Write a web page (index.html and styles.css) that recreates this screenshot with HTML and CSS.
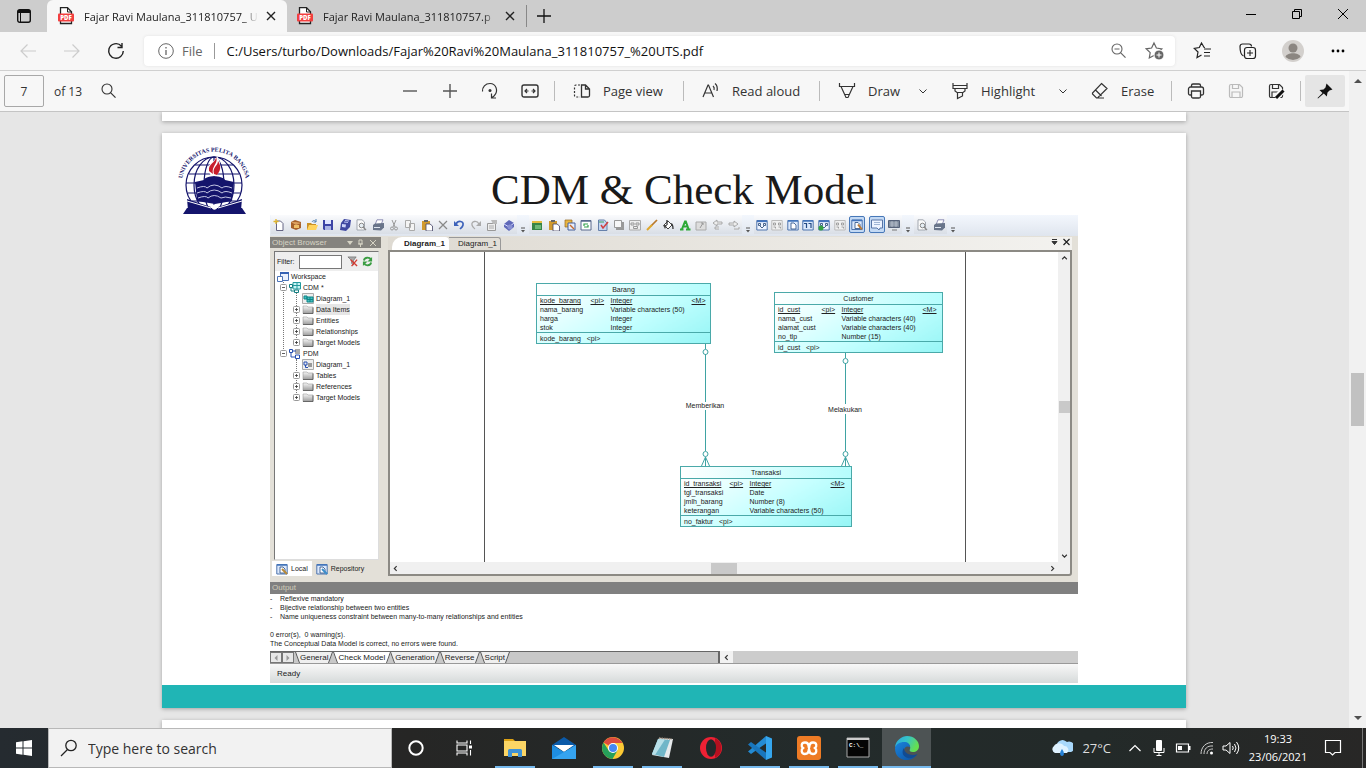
FILE: index.html
```html
<!DOCTYPE html>
<html lang="en">
<head>
<meta charset="utf-8">
<title>Fajar Ravi Maulana_311810757_ UTS.pdf</title>
<link rel="stylesheet" href="styles.css">
</head>
<body>
<svg class="defs" aria-hidden="true">
  <defs>
    <linearGradient id="edgeA" x1="0" y1="0" x2="1" y2="0.4"><stop offset="0" stop-color="#2aa5e0"/><stop offset="0.5" stop-color="#35c3c9"/><stop offset="1" stop-color="#65e04f"/></linearGradient>
    <linearGradient id="edgeB" x1="0" y1="0" x2="1" y2="1"><stop offset="0" stop-color="#1b84dc"/><stop offset="1" stop-color="#0c4f9e"/></linearGradient>
    <linearGradient id="folderG" x1="0" y1="0" x2="0" y2="1"><stop offset="0" stop-color="#f6f6f6"/><stop offset="1" stop-color="#9c9c9c"/></linearGradient>
  </defs>
  <symbol id="pdf" viewBox="0 0 16 18"><path d="M2.5.7h7l4 4V16.5h-11z" fill="#fff" stroke="#222" stroke-width="1.3"/><path d="M9.5 1v4h4" fill="none" stroke="#222"/><rect y="6.500" width="16" height="8" rx="1" fill="#f23f3f"/></symbol>
  <symbol id="x" viewBox="0 0 10 10"><path d="M1 1l8 8M9 1L1 9" fill="none" stroke="currentColor" stroke-width="1.400"/></symbol>
  <symbol id="chev" viewBox="0 0 10 10"><path d="M1.500 3.500L5 7l3.500-3.500" fill="none" stroke="currentColor"/></symbol>
  <symbol id="star" viewBox="0 0 20 20"><path d="M10 2l2.400 5 5.400.8-4 3.800.9 5.400L10 14.500 5.300 17l.9-5.400-4-3.800 5.400-.8z" fill="none" stroke="currentColor" stroke-width="1.200"/></symbol>
  <symbol id="lens" viewBox="0 0 18 18"><circle cx="7" cy="7" r="5" fill="none" stroke="currentColor" stroke-width="1.100"/><path d="M10.500 10.700l5 5" stroke="currentColor" stroke-width="1.200"/></symbol>
  <symbol id="save" viewBox="0 0 18 18"><path d="M2.500 4a1.500 1.500 0 011.500-1.500h8.500l3 3V14a1.500 1.500 0 01-1.500 1.500H4A1.500 1.500 0 012.500 14zM5.500 2.500V6.500h6V2.500M5 15.500V10h8v5.500" fill="none" stroke="currentColor" stroke-width="1.200"/></symbol>
  <symbol id="folder" viewBox="0 0 12 11"><path d="M1 2h4l1 1h5v6.500H1z" fill="url(#folderG)" stroke="#888" stroke-width=".5"/><path d="M1 9.500h10V3.500" fill="none" stroke="#555" stroke-width=".8"/></symbol>
  <symbol id="plusbox" viewBox="0 0 7 7"><rect x=".5" y=".5" width="6" height="6" rx="1" fill="#fff" stroke="#999"/><path d="M2 3.500h3M3.500 2v3" stroke="#333" stroke-width=".8"/></symbol>
  <symbol id="minusbox" viewBox="0 0 7 7"><rect x=".5" y=".5" width="6" height="6" rx="1" fill="#fff" stroke="#999"/><path d="M2 3.500h3" stroke="#333" stroke-width=".8"/></symbol>
  <symbol id="new" viewBox="0 0 12 12"><path d="M3.500 2h4L10 4.500V11.500H3.500z" fill="#fff" stroke="#557" stroke-width=".9"/><path d="M3 0v5M.5 2.500h5" stroke="#dfb52d" stroke-width="1.300"/></symbol>
  <symbol id="pack" viewBox="0 0 12 12"><path d="M1 3l4-2 3 1 3 1v6l-5 2-5-2z" fill="#a8622b"/><path d="M1 3h5l5 1-5 2z" fill="#dba060"/><path d="M4 6h5v3H4z" fill="#f0c06a"/></symbol>
  <symbol id="open" viewBox="0 0 12 12"><path d="M1 4h4l1 1h4v6H1z" fill="#c99024"/><path d="M3 6h9l-2 5H1z" fill="#ffd35c"/><path d="M6 3c1-2 3-2 4 0M10 0v3H7.500" fill="none" stroke="#5080b0"/></symbol>
  <symbol id="disk" viewBox="0 0 12 12"><path d="M1 1h10v10H2l-1-1z" fill="#3b43a5"/><path d="M3 1h6v4H3z" fill="#dfe5ff"/><path d="M3 7h6v4H3z" fill="#aab4e4"/></symbol>
  <symbol id="disks" viewBox="0 0 12 12"><path d="M5 0l7 1-1 7-4 4-6-1 1-7z" fill="#4048a2"/><path d="M3 5l4 .5-.5 3-3.500-.5z" fill="#cdd4fa"/><path d="M6 1.500l4 .5M5 3l4 .5" stroke="#b9c0f1"/></symbol>
  <symbol id="preview" viewBox="0 0 12 12"><path d="M2 .8h5L9.500 3v8H2z" fill="#fafafa" stroke="#9a9fa8" stroke-width=".9"/><circle cx="6.500" cy="6.500" r="2.300" fill="#e6eef4" stroke="#888"/><path d="M8 8l3 3" stroke="#888" stroke-width="1.300"/></symbol>
  <symbol id="print" viewBox="0 0 12 12"><path d="M5 .8h6l-2 5H3z" fill="#fff" stroke="#669" stroke-width=".7"/><path d="M1 6l2-1.500 9-.5v4.500L9 11.500 1 11z" fill="#69758a"/><path d="M2 8.500h6" stroke="#dfe6f0"/></symbol>
  <symbol id="cut" viewBox="0 0 12 12"><path d="M4 1l3 7M8 1L5 8" stroke="#999"/><circle cx="4" cy="9.500" r="1.500" fill="none" stroke="#999"/><circle cx="8" cy="9.500" r="1.500" fill="none" stroke="#999"/></symbol>
  <symbol id="copy" viewBox="0 0 12 12"><path d="M1.500 1.500h5v7h-5zM5.500 4.500h5v7h-5z" fill="#f4f4f4" stroke="#aaa"/></symbol>
  <symbol id="paste" viewBox="0 0 12 12"><path d="M1 2h8v9H1z" fill="#d19a2e"/><path d="M3 1h4v2H3z" fill="#666"/><path d="M5 5h4l2.500 2v5H5z" fill="#fff" stroke="#446" stroke-width=".8"/></symbol>
  <symbol id="del" viewBox="0 0 12 12"><path d="M2 2l8 8M10 2l-8 8" stroke="#888" stroke-width="1.200"/></symbol>
  <symbol id="undo" viewBox="0 0 12 12"><path d="M3 5c2-4 8-3 7 1-.4 2-2 3-3 4" fill="none" stroke="#3d62ba" stroke-width="1.700"/><path d="M1 2v5h5z" fill="#3d62ba"/></symbol>
  <symbol id="redo" viewBox="0 0 12 12"><path d="M9 5C7 1 1 2 2 6c.4 2 2 3 3 4" fill="none" stroke="#aaa" stroke-width="1.300"/><path d="M11 2v5H6z" fill="#aaa"/></symbol>
  <symbol id="props" viewBox="0 0 12 12"><path d="M1.500 4.500h8v7h-8z" fill="#eee" stroke="#999"/><path d="M3 7h5M3 9h5" stroke="#999" stroke-width=".8"/><path d="M5 1h6v4H7z" fill="#bbb"/></symbol>
  <symbol id="book" viewBox="0 0 12 12"><path d="M1 5l5-4 5 3v4l-5 4-5-4z" fill="#6069b9"/><path d="M1 5l5 3 5-4" fill="none" stroke="#d8dcff"/><circle cx="7" cy="8" r="2.500" fill="#8991d3"/></symbol>
  <symbol id="green" viewBox="0 0 12 12"><path d="M1 3h4l1-1h5v9H1z" fill="#378446"/><path d="M1 3h10" stroke="#e5bc3f" stroke-width="2"/><path d="M4 6h6v4H4z" fill="#6db777"/></symbol>
  <symbol id="layers" viewBox="0 0 12 12"><path d="M1 1h7v7H1z" fill="#e8b542" stroke="#96681f" stroke-width=".7"/><path d="M4 4h7v7H4z" fill="#e6eefc" stroke="#47609b"/><path d="M6 6l4 4" stroke="#c66b32" stroke-width="1.500"/></symbol>
  <symbol id="refresh" viewBox="0 0 12 12"><path d="M1 1.500h10v9.500H1z" fill="#fff" stroke="#58688c"/><path d="M1 2h10" stroke="#58688c" stroke-width="1.500"/><path d="M4 7V5h4M8 6v2H4" fill="none" stroke="#32a049" stroke-width="1.200"/></symbol>
  <symbol id="check" viewBox="0 0 12 12"><path d="M1.500 1h6L10 4v7.500H1.500z" fill="#c3d6f2" stroke="#6681ab"/><path d="M4 6l2 3 5-6" fill="none" stroke="#d04141" stroke-width="1.500"/><path d="M2 3h5" stroke="#42a060"/></symbol>
  <symbol id="shadow" viewBox="0 0 12 12"><path d="M3 3h8v8H3z" fill="#999"/><path d="M1.500 1.500h7v7h-7z" fill="#f7f7f7" stroke="#999"/></symbol>
  <symbol id="gridgray" viewBox="0 0 12 12"><path d="M.5 1.500h11v9.500H.5z" fill="#eee" stroke="#aaa"/><path d="M2 4h3v2H2zM7 4h3v2H7zM4.500 7.500h4v2h-4z" fill="none" stroke="#999"/></symbol>
  <symbol id="brush" viewBox="0 0 12 12"><path d="M11 1L5 7" stroke="#b8782b" stroke-width="1.700"/><path d="M6 6L1 11" stroke="#dfa72d" stroke-width="2"/></symbol>
  <symbol id="bucket" viewBox="0 0 12 12"><path d="M2 6l4-4 4 4-4 4z" fill="#fff" stroke="#444"/><path d="M5 1v5M9 5c2 0 2 2 2 5" fill="none" stroke="#333" stroke-width="1.300"/><path d="M1 6h4l-2 4z" fill="#444"/></symbol>
  <symbol id="lettera" viewBox="0 0 12 12"><path d="M1 10.500h3.500M7 10.500h4.500M3 10L6 2.500h.8L9.500 10M4.500 7.500H8" fill="none" stroke="#2da936" stroke-width="2"/></symbol>
  <symbol id="picgray" viewBox="0 0 12 12"><path d="M1 3h10v8H1z" fill="#ddd" stroke="#aaa"/><path d="M5 9l3-5M6 4h2v2" fill="none" stroke="#999"/></symbol>
  <symbol id="left" viewBox="0 0 12 12"><path d="M6 1L2 4l4 3V5h5V3H6zM8 8H4v2h4" fill="#eee" stroke="#999" stroke-width=".8"/></symbol>
  <symbol id="right" viewBox="0 0 12 12"><path d="M6 2l4 3-4 3V6H1V4h5zM6 10h5V8" fill="#eee" stroke="#999" stroke-width=".8"/></symbol>
  <symbol id="win" viewBox="0 0 12 12"><path d="M.8 1.500h10.400v9.500H.8z" fill="#eef4ff" stroke="#4e74ad"/><path d="M1 2.300h10" stroke="#4274bd" stroke-width="1.700"/><path d="M2.500 4.500h2v2h-2zM7.500 4.500h2v2h-2zM4 7l2 2 2-2" fill="none" stroke="#34547f" stroke-width=".9"/></symbol>
  <symbol id="wingray" viewBox="0 0 12 12"><path d="M.8 1.500h10.400v9.500H.8z" fill="#f0f0f0" stroke="#bbb"/><path d="M2.500 4h2v2h-2zM7.500 4h2v2h-2zM2.500 8h2v1.500M7.500 8h2v1.500" fill="none" stroke="#999" stroke-width=".9"/></symbol>
  <symbol id="windoc" viewBox="0 0 12 12"><path d="M.8 1.500h10.400v9.500H.8z" fill="#dce9fc" stroke="#4e74ad"/><path d="M1 2h10" stroke="#4274bd" stroke-width="1.500"/><path d="M4 4h3l2 2v4H4z" fill="#fff" stroke="#234a84" stroke-width=".8"/></symbol>
  <symbol id="wintwo" viewBox="0 0 12 12"><path d="M.8 1.500h10.400v9.500H.8z" fill="#dce9fc" stroke="#4e74ad"/><path d="M1 2h10" stroke="#4274bd" stroke-width="1.500"/><path d="M2 4.500h2.500V9M6.500 4.500H9V9" fill="none" stroke="#234a84" stroke-width="1.200"/></symbol>
  <symbol id="note" viewBox="0 0 12 12"><path d="M.5 1.500h11v8H9l-1 2-2-2H.5z" fill="#edf3ff" stroke="#5975a6"/><path d="M3 4h6M3 6h6" stroke="#8ba4ca" stroke-width=".8"/></symbol>
  <symbol id="screen" viewBox="0 0 12 12"><path d="M.5 1.500h11v7H.5z" fill="#7d899b" stroke="#56627a"/><path d="M2 4h8M2 6h8M4 2v6M8 2v6" stroke="#ccd3df" stroke-width=".6"/><path d="M4 11h5" stroke="#777"/></symbol>
  <symbol id="dd" viewBox="0 0 6 6"><path d="M1 1h4" stroke="#555"/><path d="M1 3h4L3 5.500z" fill="#555"/></symbol>
</svg>

<header class="tabstrip">
  <button class="tabmenu" aria-label="Tab actions menu"><svg width="16" height="16" viewBox="0 0 16 16"><rect x="1.700" y="1.700" width="12.600" height="12.600" rx="2" fill="none" stroke="#111" stroke-width="1.400"/><path d="M2 3.500h12" stroke="#111" stroke-width="3"/><path d="M4.500 4v10" stroke="#111"/></svg></button>
  <div class="tab active"><svg class="pdf" viewBox="0 0 16 18"><use href="#pdf"/><text x="8" y="12.600">PDF</text></svg><span class="tabname">Fajar Ravi Maulana_311810757_ U</span><button class="close" aria-label="Close tab"><svg width="10" height="10"><use href="#x"/></svg></button></div>
  <div class="tab"><svg class="pdf" viewBox="0 0 16 18"><use href="#pdf"/><text x="8" y="12.600">PDF</text></svg><span class="tabname">Fajar Ravi Maulana_311810757.p</span><button class="close" aria-label="Close tab"><svg width="10" height="10"><use href="#x"/></svg></button></div>
  <button class="newtab" aria-label="New tab"><svg width="16" height="16" viewBox="0 0 16 16"><path d="M8 1v14M1 8h14" stroke="#111" stroke-width="1.300"/></svg></button>
  <div class="winbtns">
    <button aria-label="Minimize"><svg width="12" height="12" viewBox="0 0 12 12"><path d="M1 6.500h10" stroke="#000"/></svg></button>
    <button aria-label="Restore"><svg width="12" height="12" viewBox="0 0 12 12"><path d="M1.500 3.500h7v7h-7zM3.500 3.500v-2h7v7h-2" fill="none" stroke="#000"/></svg></button>
    <button aria-label="Close"><svg width="12" height="12" viewBox="0 0 12 12"><path d="M1 1l10 10M11 1L1 11" stroke="#000"/></svg></button>
  </div>
</header>

<nav class="navbar">
  <button class="nav dim" aria-label="Back"><svg width="18" height="18" viewBox="0 0 18 18"><path d="M17 9H2M8.500 2.500L2 9l6.500 6.500" fill="none" stroke="currentColor" stroke-width="1.200"/></svg></button>
  <button class="nav dim" aria-label="Forward"><svg width="18" height="18" viewBox="0 0 18 18"><path d="M1 9h15M9.500 2.500L16 9l-6.500 6.500" fill="none" stroke="currentColor" stroke-width="1.200"/></svg></button>
  <button class="nav" aria-label="Refresh"><svg width="18" height="18" viewBox="0 0 18 18"><path d="M16.300 9A7.300 7.300 0 112 6.800 7.300 7.300 0 0114.500 4.200M15 1v4.500h-4.500" fill="none" stroke="currentColor" stroke-width="1.400"/></svg></button>
  <div class="omnibox">
    <svg class="grey" width="16" height="16" viewBox="0 0 16 16"><circle cx="8" cy="8" r="7.300" fill="none" stroke="currentColor"/><path d="M8 7v5M8 4v1.400" stroke="currentColor" stroke-width="1.300"/></svg>
    <label class="scheme" for="url">File</label>
    <input id="url" class="url" type="text" value="C:/Users/turbo/Downloads/Fajar%20Ravi%20Maulana_311810757_%20UTS.pdf">
    <button class="inbox" aria-label="Zoom"><svg width="18" height="18"><use href="#lens"/><path d="M4.500 7h5" stroke="currentColor"/></svg></button>
    <button class="inbox" aria-label="Add to favorites"><svg width="20" height="20"><use href="#star" x="-1"/><circle cx="14" cy="14" r="5" fill="#666" stroke="#fff"/><path d="M14 11.500v5M11.500 14h5" stroke="#fff"/></svg></button>
  </div>
  <div class="navright">
    <button class="nav" aria-label="Favorites"><svg width="20" height="20" viewBox="0 0 20 20"><path d="M12 6.500l-1-.2L8.500 2 6.300 6.500l-5 .8L5 11l-1 5.500 4.500-2.500M11 8h7M11 11.500h6M11 15h6" fill="none" stroke="currentColor" stroke-width="1.200"/></svg></button>
    <button class="nav" aria-label="Collections"><svg width="20" height="20" viewBox="0 0 20 20"><path d="M5.500 15C3 14 2 10 2 5.500A2.500 2.500 0 014.500 3H11a2.500 2.500 0 012.500 2.500" fill="none" stroke="currentColor" stroke-width="1.200"/><rect x="6.500" y="6.500" width="11" height="11" rx="2.500" fill="#f7f7f7" stroke="currentColor" stroke-width="1.200"/><path d="M12 9v6M9 12h6" stroke="currentColor" stroke-width="1.100"/></svg></button>
    <button class="nav" aria-label="Profile"><svg width="22" height="22" viewBox="0 0 22 22"><circle cx="11" cy="11" r="11" fill="#d3d0cd"/><circle cx="11" cy="8" r="4.500" fill="#8b8681"/><path d="M3.500 17c1-5 14-5 15 0a11 11 0 01-15 0z" fill="#8b8681"/></svg></button>
    <button class="nav" aria-label="Settings and more"><svg width="16" height="4" viewBox="0 0 16 4"><circle cx="3" cy="2" r="1.400"/><circle cx="8" cy="2" r="1.400"/><circle cx="13" cy="2" r="1.400"/></svg></button>
  </div>
</nav>

<div class="viewer">
  <div class="viewmain">
    <div class="pdfbar">
      <input class="pageno" type="text" value="7" aria-label="Page number">
      <span class="of">of 13</span>
      <button class="find" aria-label="Find"><svg width="18" height="18"><use href="#lens"/></svg></button>
      <div class="tools">
        <button class="sq" aria-label="Zoom out"><svg width="16" height="16" viewBox="0 0 16 16"><path d="M1 8h14" stroke="#555" stroke-width="1.400"/></svg></button>
        <button class="sq" aria-label="Zoom in"><svg width="16" height="16" viewBox="0 0 16 16"><path d="M1 8h14M8 1v14" stroke="#555" stroke-width="1.400"/></svg></button>
        <button class="sq" aria-label="Rotate"><svg width="18" height="18" viewBox="0 0 18 18"><path d="M1.500 9.500C1 5 4.500 1.500 9 1.500c6 0 9 7.500 4 12.500l-2 1.500M10.500 11.500v4.500H15" fill="none" stroke="currentColor" stroke-width="1.200"/><circle cx="9" cy="8.500" r="1.500" fill="currentColor"/></svg></button>
        <button class="sq" aria-label="Fit to width"><svg width="18" height="16" viewBox="0 0 18 16"><rect x="1" y="2" width="16" height="12" rx="2" fill="none" stroke="currentColor" stroke-width="1.400"/><path d="M4 8h3.500M10.500 8H14M6 6L4 8l2 2M12 6l2 2-2 2" fill="none" stroke="currentColor" stroke-width="1.200"/></svg></button>
        <span class="sep tight"></span>
        <button class="lab pv"><svg width="18" height="18" viewBox="0 0 18 18"><path d="M7 3H3a1.500 1.500 0 00-1.500 1.500v9A1.500 1.500 0 003 15h4" fill="none" stroke="currentColor" stroke-width="1.200" stroke-dasharray="2 1.500"/><path d="M8.500 3h4l4 4v6.500A1.500 1.500 0 0115 15H8.500zM12.500 3v4h4" fill="none" stroke="currentColor" stroke-width="1.300"/></svg>Page view</button>
        <span class="sep"></span>
        <button class="lab ra"><svg width="18" height="18" viewBox="0 0 18 18"><path d="M1 15L6 3h.5l5 12M3 11h6.500M11 4c1.300 1 1.300 3 1 4M13 1.500c2.500 2 2.500 5 2 7.500" fill="none" stroke="currentColor" stroke-width="1.200"/></svg>Read aloud</button>
        <span class="sep"></span>
        <button class="lab dr"><svg width="18" height="18" viewBox="0 0 18 18"><path d="M1.500 1v3.500h15V1M3 4.500l5 11h2l5-11M7 12.500h4" fill="none" stroke="currentColor" stroke-width="1.200"/></svg>Draw<svg class="chev" width="10" height="10"><use href="#chev"/></svg></button>
        <button class="lab hl"><svg width="18" height="18" viewBox="0 0 18 18"><path d="M2 1v5.500h14V1M2 3.500h14M4 6.500V9l2 1.500h6L14 9V6.500M6.500 10.500v6l5-2.500v-3.500" fill="none" stroke="currentColor" stroke-width="1.200"/></svg>Highlight<svg class="chev" width="10" height="10"><use href="#chev"/></svg></button>
        <button class="lab er"><svg width="18" height="18" viewBox="0 0 18 18"><path d="M10.500 1.500l5.500 5-9.500 9.500H5.500L1.500 12V11zM4.500 8l6 6M5 16h8" fill="none" stroke="currentColor" stroke-width="1.200"/></svg>Erase</button>
        <span class="sep end"></span>
        <button class="sq" aria-label="Print"><svg width="18" height="18" viewBox="0 0 18 18"><path d="M4.500 5V3.500A1.500 1.500 0 016 2h6a1.500 1.500 0 011.500 1.500V5M4.500 13H3a1.500 1.500 0 01-1.500-1.500V7A2 2 0 013.500 5h11a2 2 0 012 2v4.500A1.500 1.500 0 0115 13h-1.500M4.500 9h9v5.500A1.500 1.500 0 0112 16H6a1.500 1.500 0 01-1.500-1.500z" fill="none" stroke="currentColor" stroke-width="1.300"/></svg></button>
        <button class="sq faint" aria-label="Save" disabled><svg width="18" height="18"><use href="#save"/></svg></button>
        <button class="sq" aria-label="Save as"><svg width="18" height="18"><use href="#save"/><path d="M16 8l-7 8" stroke="#f7f7f7" stroke-width="6"/><path d="M16.500 8.500L9 16" stroke="#111" stroke-width="3"/></svg></button>
        <span class="sep last"></span>
        <button class="sq pin" aria-label="Unpin toolbar"><svg width="18" height="18" viewBox="0 0 18 18"><path d="M10.500 1.500l6 6-3 1-2 2-.7 4-3-3L2 16.500l-.5-.5 5-5-3-3 4-.6 2-2z" fill="#111"/></svg></button>
      </div>
    </div>

    <main class="pages">
      <div class="page prev"></div>
      <section class="page slide">
        <div class="slidehead">
          <svg class="logo" viewBox="0 0 76 68" role="img" aria-label="Universitas Pelita Bangsa">
            <path id="arc" d="M7 45A32 31.500 0 1169 45" fill="none"/>
            <text class="arctext"><textPath href="#arc" startOffset="50%" text-anchor="middle">UNIVERSITAS PELITA BANGSA</textPath></text>
            <g fill="none" stroke="#14146c" stroke-width="1.200"><circle cx="38" cy="39" r="28"/><ellipse cx="38" cy="39" rx="10" ry="28"/><ellipse cx="38" cy="39" rx="20" ry="28"/><path d="M38 11v50M10 37h56M13 28h50M19 19h38M12 47h52M16 55h44"/></g>
            <path d="M32 24c0-8 8-8 9-14 4 6 5 14-1 20h-5z" fill="#fff"/>
            <path d="M33 25c-1-8 7-8 7-14 3 6-5 9-3 17zM38 28c-2-7 4-8 4-13 4 6 2 10-1 14z" fill="#c81e2c"/>
            <path d="M19 36l9-2c2-5 18-5 21 0l9 2-2 19-17 3-18-3z" fill="#14146c"/>
            <path d="M21 42q8-3 10 0 7-6 15 0 3-3 10 0M21 47q8-3 10 0 7-6 15 0 3-3 10 0M22 52q8-3 10 0 6-5 13 0 4-2 10 0" fill="none" stroke="#d8daf0" stroke-width=".9"/>
            <path d="M11 53l24 8v3H12zM66 53l-24 8v3h23z" fill="#14146c"/>
            <path d="M7 68l4-6h25q2 3 5 0h25l4 6z" fill="#14146c"/>
            <path d="M11 55l24 7M66 55l-24 7" stroke="#fff" stroke-width="1"/>
            <circle cx="38.500" cy="61" r="2.500" fill="#fff"/>
          </svg>
          <h1>CDM &amp; Check Model</h1>
        </div>

        <div class="app">
          <div class="toolbar">
            <div class="grp g15"><svg><use href="#new"/></svg><svg><use href="#pack"/></svg><svg><use href="#open"/></svg><svg><use href="#disk"/></svg><svg><use href="#disks"/></svg><svg><use href="#preview"/></svg><svg><use href="#print"/></svg><svg><use href="#cut"/></svg><svg><use href="#copy"/></svg><svg><use href="#paste"/></svg><svg><use href="#del"/></svg><svg><use href="#undo"/></svg><svg><use href="#redo"/></svg><svg><use href="#props"/></svg><svg><use href="#book"/></svg></div>
            <svg class="dd"><use href="#dd"/></svg>
            <div class="grp g13"><svg><use href="#green"/></svg><svg><use href="#paste"/></svg><svg><use href="#layers"/></svg><svg><use href="#refresh"/></svg><svg><use href="#check"/></svg><svg><use href="#shadow"/></svg><svg><use href="#gridgray"/></svg><svg><use href="#brush"/></svg><svg><use href="#bucket"/></svg><svg><use href="#lettera"/></svg><svg><use href="#picgray"/></svg><svg><use href="#left"/></svg><svg><use href="#right"/></svg></div>
            <svg class="dd"><use href="#dd"/></svg>
            <div class="grp g9"><svg><use href="#win"/></svg><svg><use href="#wingray"/></svg><svg><use href="#windoc"/></svg><svg><use href="#wintwo"/></svg><svg><use href="#win"/><circle cx="3" cy="9" r="2.500" fill="#35a342"/></svg><svg><use href="#wingray"/></svg><svg class="on" viewBox="0 0 12 12"><use href="#windoc"/><path d="M7 6l4 5" stroke="#b87938" stroke-width="2"/></svg><svg class="on" viewBox="0 0 12 12"><use href="#note"/></svg><svg><use href="#screen"/></svg></div>
            <svg class="dd"><use href="#dd"/></svg>
            <div class="grp g2"><svg><use href="#preview"/></svg><svg><use href="#print"/></svg></div>
            <svg class="dd"><use href="#dd"/></svg>
          </div>

          <div class="work">
            <aside class="browser">
              <div class="btitle"><span>Object Browser</span><svg width="30" height="8" viewBox="0 0 30 8"><path d="M0 2h6L3 6z" fill="#d6d3c4"/><path d="M12 1h3v4h-3zM11 5h5M13.500 5v3M23 1l6 6M29 1l-6 6" fill="none" stroke="#d6d3c4"/></svg></div>
              <div class="bbody">
                <div class="filter"><label for="filter">Filter:</label><input id="filter" type="text"><svg width="11" height="11" viewBox="0 0 12 12"><path d="M1 1h9L7 5v5L5 8V5z" fill="#aaa" stroke="#666" stroke-width=".7"/><path d="M4 4l7 7M11 4l-6 7" stroke="#d43b32" stroke-width="1.500"/></svg><svg width="11" height="11" viewBox="0 0 12 12"><path d="M2 5c1-4 6-4 8-1M10 7c-1 4-6 4-8 1" fill="none" stroke="#3a9d42" stroke-width="2"/><path d="M11 1v5H6zM1 11V6h5z" fill="#3a9d42"/></svg></div>
                <div class="tree">
                  <div class="row"><svg width="12" height="11" viewBox="0 0 12 11"><path d="M3.500 1.500h8v8h-8z" fill="#eaf2ff" stroke="#4b73b7"/><path d="M3 2h9" stroke="#3462b5" stroke-width="2"/><path d="M.5 5.500h5v5h-5z" fill="#fff" stroke="#4b73b7"/></svg>Workspace</div>
                  <ul class="lvl1">
                    <li><div class="row"><svg class="box"><use href="#minusbox"/></svg><svg width="12" height="11" viewBox="0 0 12 11"><path d="M4 .5h7.500V7H4zM4 3.500h8M8 .5V7" fill="#c8f5f5" stroke="#249a9d"/><path d="M.5 2.500h3v3h-3zM5.500 8h4v2.500h-4zM2 5.500V9h3" fill="none" stroke="#148082"/></svg>CDM *</div>
                      <ul class="lvl2">
                        <li class="row"><i class="box"></i><svg width="12" height="11" viewBox="0 0 12 11"><path d="M.5.5h11v10H.5z" fill="#eee" stroke="#aaa"/><path d="M2 3h3v3H2zM5 4h6v5H5zM5 6.500h6M8 4v5" fill="#46bfc0" stroke="#0d8587"/></svg>Diagram_1</li>
                        <li class="row"><svg class="box"><use href="#plusbox"/></svg><svg width="12" height="11"><use href="#folder"/></svg><span class="sel">Data Items</span></li>
                        <li class="row"><svg class="box"><use href="#plusbox"/></svg><svg width="12" height="11"><use href="#folder"/></svg>Entities</li>
                        <li class="row"><svg class="box"><use href="#plusbox"/></svg><svg width="12" height="11"><use href="#folder"/></svg>Relationships</li>
                        <li class="row"><svg class="box"><use href="#plusbox"/></svg><svg width="12" height="11"><use href="#folder"/></svg>Target Models</li>
                      </ul>
                    </li>
                    <li><div class="row"><svg class="box"><use href="#minusbox"/></svg><svg width="12" height="11" viewBox="0 0 12 11"><path d="M6 1h5v5H6z" fill="#aaa"/><path d="M.5 1.500h3v3h-3zM6.500 7h4v3.500h-4zM2 4.500V9h4M4 3h3" fill="none" stroke="#274fb0"/></svg>PDM</div>
                      <ul class="lvl2">
                        <li class="row"><i class="box"></i><svg width="12" height="11" viewBox="0 0 12 11"><path d="M.5.5h11v10H.5z" fill="#eee" stroke="#aaa"/><path d="M2 3h3v3H2zM3.500 6v2.500H6" fill="none" stroke="#274fb0"/><path d="M6 4h4v4H6z" fill="#999"/></svg>Diagram_1</li>
                        <li class="row"><svg class="box"><use href="#plusbox"/></svg><svg width="12" height="11"><use href="#folder"/></svg>Tables</li>
                        <li class="row"><svg class="box"><use href="#plusbox"/></svg><svg width="12" height="11"><use href="#folder"/></svg>References</li>
                        <li class="row"><svg class="box"><use href="#plusbox"/></svg><svg width="12" height="11"><use href="#folder"/></svg>Target Models</li>
                      </ul>
                    </li>
                  </ul>
                </div>
              </div>
              <div class="btabs"><button class="cur"><svg width="12" height="12"><use href="#windoc"/><path d="M6 6l5 5" stroke="#b88a38" stroke-width="2"/></svg>Local</button><button><svg width="12" height="12"><use href="#windoc"/><path d="M6 6l5 5" stroke="#3a8ecb" stroke-width="2"/></svg>Repository</button></div>
            </aside>

            <div class="editor">
              <div class="etabs"><button class="cur">Diagram_1</button><button>Diagram_1</button><svg width="20" height="8" viewBox="0 0 20 8"><path d="M1 1.500h5M1 3.500h5L3.500 6.500z" fill="#333" stroke="#333"/><path d="M12.500 1l6 6M18.500 1l-6 6" stroke="#222" stroke-width="1.200"/></svg></div>
              <div class="frame">
                <div class="canvas">
                  <svg class="links" viewBox="0 0 668 310" fill="none">
                    <path d="M94.500 0v310M575.500 0v310" stroke="#555"/>
                    <g stroke="#3fa3a3"><path d="M315.500 92v5M315.500 102v48M315.500 158v41M315.500 205v9M315.500 205l-4 9M315.500 205l4 9"/><circle cx="315.500" cy="100" r="2.500"/><circle cx="315.500" cy="202" r="2.500"/>
                    <path d="M455.500 101v5M455.500 111v41M455.500 162v37M455.500 205v9M455.500 205l-4 9M455.500 205l4 9"/><circle cx="455.500" cy="109" r="2.500"/><circle cx="455.500" cy="202" r="2.500"/></g>
                  </svg>
                  <span class="link l1">Memberikan</span><span class="link l2">Melakukan</span>
                  <table class="entity e1"><caption>Barang</caption><tbody>
                    <tr class="key"><td><u>kode_barang</u></td><td><u>&lt;pi&gt;</u></td><td><u>Integer</u></td><td><u>&lt;M&gt;</u></td></tr>
                    <tr><td>nama_barang</td><td></td><td>Variable characters (50)</td><td></td></tr>
                    <tr><td>harga</td><td></td><td>Integer</td><td></td></tr>
                    <tr><td>stok</td><td></td><td>Integer</td><td></td></tr></tbody>
                    <tfoot><tr><td colspan="4">kode_barang&nbsp;&nbsp; &lt;pi&gt;</td></tr></tfoot></table>
                  <table class="entity e2"><caption>Customer</caption><tbody>
                    <tr class="key"><td><u>id_cust</u></td><td><u>&lt;pi&gt;</u></td><td><u>Integer</u></td><td><u>&lt;M&gt;</u></td></tr>
                    <tr><td>nama_cust</td><td></td><td>Variable characters (40)</td><td></td></tr>
                    <tr><td>alamat_cust</td><td></td><td>Variable characters (40)</td><td></td></tr>
                    <tr><td>no_tlp</td><td></td><td>Number (15)</td><td></td></tr></tbody>
                    <tfoot><tr><td colspan="4">id_cust&nbsp;&nbsp; &lt;pi&gt;</td></tr></tfoot></table>
                  <table class="entity e3"><caption>Transaksi</caption><tbody>
                    <tr class="key"><td><u>id_transaksi</u></td><td><u>&lt;pi&gt;</u></td><td><u>Integer</u></td><td><u>&lt;M&gt;</u></td></tr>
                    <tr><td>tgl_transaksi</td><td></td><td>Date</td><td></td></tr>
                    <tr><td>jmlh_barang</td><td></td><td>Number (8)</td><td></td></tr>
                    <tr><td>keterangan</td><td></td><td>Variable characters (50)</td><td></td></tr></tbody>
                    <tfoot><tr><td colspan="4">no_faktur&nbsp;&nbsp; &lt;pi&gt;</td></tr></tfoot></table>
                </div>
                <div class="vs"><svg viewBox="0 0 6 6"><path d="M1 4.500l2-2 2 2"/></svg><i></i><svg viewBox="0 0 6 6"><path d="M1 1.500l2 2 2-2"/></svg></div>
                <div class="hs"><svg viewBox="0 0 6 6"><path d="M4 1L2 3l2 2"/></svg><i></i><svg viewBox="0 0 6 6"><path d="M2 1l2 2-2 2"/></svg></div>
              </div>
            </div>
          </div>

          <div class="outtitle">Output</div>
          <div class="output">
            <ul><li>Reflexive mandatory</li><li>Bijective relationship between two entities</li><li>Name uniqueness constraint between many-to-many relationships and entities</li></ul>
            <p>0 error(s),&nbsp; 0 warning(s).</p>
            <p>The Conceptual Data Model is correct, no errors were found.</p>
          </div>
          <div class="outtabs">
            <div class="otl">
              <span class="step"><svg width="4" height="6" viewBox="0 0 4 6"><path d="M3.500 0v6L.5 3z" fill="#999"/></svg></span><span class="step"><svg width="4" height="6" viewBox="0 0 4 6"><path d="M.5 0v6l3-3z" fill="#999"/></svg></span>
              <div class="otabs"><button>General</button><button class="cur">Check Model</button><button>Generation</button><button>Reverse</button><button>Script</button></div>
            </div>
            <div class="otr"><svg viewBox="0 0 6 6"><path d="M4 1L2 3l2 2"/></svg></div>
          </div>
          <div class="status">Ready</div>
        </div>
        <div class="teal"></div>
      </section>
      <div class="page next"></div>
    </main>
  </div>
  <div class="scroll"><svg width="8" height="5" viewBox="0 0 8 5"><path d="M0 5l4-4 4 4z" fill="#505050"/></svg><i></i><svg width="8" height="5" viewBox="0 0 8 5"><path d="M0 0l4 4 4-4z" fill="#505050"/></svg></div>
</div>

<footer class="taskbar">
  <button class="start" aria-label="Start"><svg width="16" height="16" viewBox="0 0 16 16"><path d="M0 2.200l6.500-.9v6.200H0zM7.500 1.200L16 0v7.500H7.500zM0 8.500h6.500v6.200L0 13.800zM7.500 8.500H16V16l-8.500-1.200z" fill="#fff"/></svg></button>
  <div class="search"><svg width="18" height="18" viewBox="0 0 18 18"><circle cx="11" cy="6.500" r="5.200" fill="none" stroke="#222" stroke-width="1.300"/><path d="M7.500 10.500L1 17" stroke="#222" stroke-width="1.300"/></svg><input type="text" placeholder="Type here to search" aria-label="Search"></div>
  <button class="tb" aria-label="Cortana"><svg width="18" height="18" viewBox="0 0 18 18"><circle cx="9" cy="9" r="6.700" fill="none" stroke="#fff" stroke-width="2"/></svg></button>
  <button class="tb" aria-label="Task View"><svg width="18" height="18" viewBox="0 0 18 18"><path d="M2 1.500V4h10V1.500M2 16.500V14h10v2.500M2 6h10v6H2zM15.500 1.500V5M15.500 11v5.500" fill="none" stroke="#fff" stroke-width="1.100"/><path d="M14 6.500h3v3h-3z" fill="#fff"/></svg></button>
  <div class="apps">
    <button class="run" aria-label="File Explorer"><svg width="24" height="24" viewBox="0 0 24 24"><path d="M1 3h9l2 2H1z" fill="#dca114"/><path d="M1 5h22v15H1z" fill="#fbd565"/><path d="M5 21v-6.500a1.500 1.500 0 011.500-1.500h11a1.500 1.500 0 011.500 1.500V21h-4v-4H9v4z" fill="#3f92d6"/></svg></button>
    <button aria-label="Mail"><svg width="24" height="24" viewBox="0 0 24 24"><path d="M0 9L12 1l12 8v3H0z" fill="#0b5aa8"/><path d="M2 9h20l-10 7z" fill="#fff"/><path d="M0 9l12 7 12-7v14H0z" fill="#1e8de0"/><path d="M0 23L14 15l10-6v14z" fill="#35a3ef"/></svg></button>
    <button class="run" aria-label="Chrome"><svg width="24" height="24" viewBox="0 0 24 24"><circle cx="12" cy="12" r="11" fill="#fcc934"/><path d="M12 12L2.500 6.500A11 11 0 0121.500 7H12z" fill="#dd4b3e"/><path d="M12 12l4.500 2.500-5 8.500A11 11 0 012.500 6.500L8 15z" fill="#26a05a"/><circle cx="12" cy="12" r="5" fill="#fff"/><circle cx="12" cy="12" r="4" fill="#4687f3"/></svg></button>
    <button class="run" aria-label="Notepad"><svg width="24" height="24" viewBox="0 0 24 24"><path d="M9 2l14 1-4 19-17-3z" fill="#e6eaec"/><path d="M8 3l12 1-6 17-12-3z" fill="#70b6c8"/><path d="M8 3l7 .6L5 19l-3-1z" fill="#b8e0e8"/><path d="M9 2l13 1" stroke="#987" stroke-width="1.500" stroke-dasharray="1.500 1"/></svg></button>
    <button aria-label="Opera"><svg width="24" height="24" viewBox="0 0 24 24"><circle cx="12" cy="12" r="11" fill="#ee2134"/><path d="M16 2a11 11 0 010 20z" fill="#b5101f"/><ellipse cx="12" cy="12" rx="5" ry="8.700" fill="#24292b"/></svg></button>
    <button class="run" aria-label="Visual Studio Code"><svg width="24" height="24" viewBox="0 0 24 24"><path d="M18 0L0 15.500l3 2.500L20 6z" fill="#248bd3"/><path d="M0 8.500l3-2.500L20 18l-2 6z" fill="#1976bd"/><path d="M18 0l6 2.500v19L18 24z" fill="#35a6ee"/></svg></button>
    <button class="run" aria-label="XAMPP"><svg width="24" height="24" viewBox="0 0 24 24"><rect width="24" height="24" rx="3" fill="#ee7b25"/><path d="M8 6.500c5 0 3 5 4 5.500 1-.5-1-5.500 4-5.500 4 0 4 4 2 5.500 2 1.500 2 6-2 6-5 0-3-4-4-5-1 1 1 5-4 5-4 0-4-4.500-2-6C4 10.500 4 6.500 8 6.500z" fill="none" stroke="#fff" stroke-width="2.300"/></svg></button>
    <button class="run" aria-label="Command Prompt"><svg width="24" height="24" viewBox="0 0 24 24"><path d="M1 2h22v19H1z" fill="#050505" stroke="#aaa"/><path d="M1 3h22" stroke="#ccc" stroke-width="2"/><text x="3" y="11" font-family="Liberation Mono, monospace" font-size="6" font-weight="700" fill="#fff">C:\_</text></svg></button>
    <button class="run focus" aria-label="Microsoft Edge"><svg width="24" height="24" viewBox="0 0 24 24"><path d="M0 11C1 4 7 0 12 0c7 0 12 5 12 10 0 4-3 6-6 6-3 0-4-1-3-3 1-3-1-5-4-5-5 0-9 1-11 3z" fill="url(#edgeA)"/><path d="M0 12C1 8 5 6 9 6c4 0 6 2 6 5-6-3-9 6-2 10 3 1 7 0 9-3-4 9-22 9-22-6z" fill="url(#edgeB)"/><path d="M9 12c-3 4-1 9 4 10 5 1 8-2 9.500-4-5 2-13 1-13.500-6z" fill="#124b91"/></svg></button>
  </div>
  <div class="tray">
    <button class="weather"><svg width="22" height="18" viewBox="0 0 22 18"><path d="M6 13a5 5 0 010-8 6 6 0 0110-2 5 5 0 014 10z" fill="#a8d8fb"/><path d="M4 14a4 4 0 01-1-7 6 6 0 0110 0 4 4 0 013 7z" fill="#dff2ff"/><path d="M11 10c3 4 2 7 0 7s-3-3 0-7z" fill="#2581d6"/></svg>27°C</button>
    <button class="ic" aria-label="Show hidden icons"><svg width="14" height="14" viewBox="0 0 14 14"><path d="M1.500 10L7 4.500l5.500 5.500" fill="none" stroke="#fff" stroke-width="1.200"/></svg></button>
    <button class="ic" aria-label="Microphone"><svg width="14" height="16" viewBox="0 0 14 16"><rect x="4" width="6" height="11" rx="1" fill="#fff"/><path d="M2 8v4.500h10V8M7 13v2.500M4.500 15.500h5" fill="none" stroke="#fff"/></svg></button>
    <button class="ic" aria-label="Battery"><svg width="16" height="12" viewBox="0 0 16 12"><path d="M1.500 2h12v8h-12z" fill="none" stroke="#fff" stroke-width="1.200"/><path d="M3 4h4v4H3zM14 4h1.500v4H14z" fill="#fff"/></svg></button>
    <button class="ic" aria-label="Network"><svg width="14" height="14" viewBox="0 0 14 14"><path d="M1 13C1 6 6 1 13 1.500M4 13c0-5 3-8.500 9-8M7 13c0-3 2-5 6-5" fill="none" stroke="#ccc"/><circle cx="11.500" cy="12" r="1.500" fill="#fff"/></svg></button>
    <button class="ic" aria-label="Volume"><svg width="18" height="14" viewBox="0 0 18 14"><path d="M1 5h3l4-3.500v11L4 9H1zM10.500 5q1.500 2 0 4M12.500 3q3 4 0 8M14.500 1q4.500 6 0 12" fill="none" stroke="#fff"/></svg></button>
    <button class="clock"><span>19:33</span><span>23/06/2021</span></button>
    <button class="action" aria-label="Notifications"><svg width="18" height="18" viewBox="0 0 18 18"><path d="M1.500 1.500h15v12H11L8.500 16 6 13.500H1.500z" fill="none" stroke="#fff" stroke-width="1.200"/></svg></button>
  </div>
</footer>
</body>
</html>
```
FILE: styles.css
```css
* { box-sizing: border-box; }
html, body { height: 100%; }
body { margin: 0; display: flex; flex-direction: column; overflow: hidden; font-family: "Open Sans", "Noto Sans", sans-serif; background: #e6e6e6; color: #222; }
button { border: 0; padding: 0; margin: 0; background: none; font: inherit; color: inherit; display: flex; align-items: center; justify-content: center; flex: none; }
input { font: inherit; color: inherit; border: 0; padding: 0; margin: 0; min-width: 0; outline: 0; }
svg { flex: none; display: block; }
.defs { position: absolute; width: 0; height: 0; }

/* Tab strip */
.tabstrip { display: flex; align-items: stretch; height: 32px; flex: none; background: #cdcdcd; font-size: 11px; }
.tabmenu { width: 47px; }
.tab { display: flex; align-items: center; width: 240px; padding: 0 11px; }
.tab.active { background: #f7f7f7; border-radius: 6px 6px 0 0; }
.tab:not(.active) { padding-left: 10px; border-right: 1px solid #888; border-image: linear-gradient(#cdcdcd 6px, #888 6px, #888 26px, #cdcdcd 26px) 1; }
.pdf { width: 16px; height: 18px; }
.pdf text { font: 800 6px "Open Sans", sans-serif; fill: #fff; text-anchor: middle; }
.tabname { flex: 1; margin-left: 10px; white-space: nowrap; -webkit-mask-image: linear-gradient(90deg, #000 92%, transparent); mask-image: linear-gradient(90deg, #000 92%, transparent); }
.close { width: 11px; margin-left: 7px; }
.newtab { width: 34px; }
.winbtns { display: flex; margin-left: auto; }
.winbtns button { width: 46px; height: 28px; }

/* Address row */
.navbar { display: flex; align-items: center; height: 39px; flex: none; padding: 0 6px; background: #f7f7f7; border-bottom: 1px solid #d0d0d0; }
.nav { width: 44px; height: 32px; }
.dim { color: #ccc; }
.omnibox { flex: 1; display: flex; align-items: center; height: 30px; margin: 0 6px; padding: 0 2px 0 14px; background: #fff; border-radius: 4px; box-shadow: 0 0 3px #e0e0e0; font-size: 13px; }
.grey, .scheme, .inbox { color: #666; }
.scheme { margin-left: 8px; padding-right: 11px; border-right: 1px solid #999; line-height: 16px; }
.url { flex: 1; margin-left: 12px; color: #111; }
.inbox { width: 36px; height: 28px; }
.navright { display: flex; gap: 1px; }

/* PDF toolbar */
.viewer { flex: 1; display: flex; min-height: 0; }
.viewmain { flex: 1; display: flex; flex-direction: column; min-width: 0; }
.pdfbar { display: flex; align-items: center; height: 41px; flex: none; padding: 0 4px; background: #f7f7f7; border-bottom: 1px solid #c4c4c4; font-size: 13px; color: #333; }
.pageno { width: 40px; height: 32px; border: 1px solid #a8a8a8; border-radius: 2px; text-align: center; font-size: 12px; background: #f7f7f7; }
.of { margin-left: 10px; font-size: 12px; }
.find { width: 18px; margin-left: 18px; }
.tools { display: flex; align-items: center; margin-left: auto; }
.sq { width: 40px; height: 32px; }
.faint { color: #bbb; }
.pin { background: #e5e5e5; border-radius: 2px; }
.lab { height: 32px; padding: 0 13px 0 10px; gap: 12px; justify-content: flex-start; white-space: nowrap; }
.pv { width: 112px; } .ra { width: 119px; } .dr { width: 113px; } .hl { width: 140px; } .er { width: 82px; padding-right: 0; }
.chev { margin-left: auto; }
.sep { width: 1px; height: 20px; margin: 0 8px; background: #bbb; }
.sep.tight { margin-left: 4px; }
.sep.end { margin-right: 4px; }
.sep.last { margin: 0 4px; }
.scroll { width: 17px; flex: none; display: flex; flex-direction: column; align-items: center; justify-content: space-between; padding: 7px 0; background: #f1f1f1; }
.scroll i { width: 13px; height: 53px; background: #c1c1c1; }

/* Document pages */
.pages { flex: 1; min-height: 0; overflow: hidden; display: flex; flex-direction: column; align-items: center; gap: 12px; padding-right: 1px; background: #e6e6e6; }
.page { width: 90%; max-width: 1024px; flex: none; background: #fff; box-shadow: 0 1px 4px rgba(0,0,0,.3); }
.prev { height: 9px; }
.next { height: 80px; }
.slidehead { display: grid; grid-template-columns: 76px 1fr 56px; height: 82px; padding: 13px 14px 0; }
.logo { width: 76px; height: 68px; overflow: visible; }
.arctext { font: bold 6px "Liberation Serif", serif; fill: #14146c; }
h1 { margin: 0; padding-top: 20px; text-align: center; font: 43px/48px "Liberation Serif", serif; color: #1a1a1a; white-space: nowrap; }
.teal { height: 23px; margin-top: 2px; background: #20b5b5; }

/* Modelling application */
.app { display: flex; flex-direction: column; margin: 0 108px; font: 7px/9px "Liberation Sans", Arial, sans-serif; color: #222; background: #e3e0d8; }
.toolbar { display: flex; align-items: center; height: 21px; padding: 0 0 2px 1px; background: linear-gradient(#f3f7fd, #dfe5ee); }
.grp { display: flex; align-items: center; justify-content: space-around; height: 19px; background: linear-gradient(#fafbfd, #d9dee6); }
.grp svg { width: 12px; height: 12px; }
.grp svg.on { width: 16px; height: 17px; padding: 1px; border: 1px solid #4778b8; border-radius: 2px; background: #c3d9f4; }
.g15 { width: 246px; } .g13 { width: 213px; } .g9 { width: 148px; } .g2 { width: 33px; }
.dd { width: 6px; height: 6px; margin: 10px 3px 0; }
.work { display: flex; height: 346px; padding: 1px 6px 6px 0; gap: 7px; }
.browser { width: 111px; display: flex; flex-direction: column; }
.btitle { display: flex; justify-content: space-between; align-items: center; height: 11px; padding: 0 4px 0 2px; background: #85837e; color: #d6d3c4; font-size: 8px; }
.bbody { flex: 1; margin: 3px 2px 0 4px; background: #fff; border: 1px solid #888; border-color: #777 #ddd #ddd #777; }
.filter { display: flex; align-items: center; height: 19px; padding: 0 5px 0 2px; background: #eee; }
.filter input { width: 44px; height: 14px; margin: 0 5px 0 4px; border: 1px solid #777; background: #fff; }
.filter svg + svg { margin-left: 4px; }
.tree { padding-left: 2px; font-size: 7px; }
.tree ul { list-style: none; margin: 0; padding: 0; position: relative; }
.row { display: flex; align-items: center; gap: 2px; height: 11px; line-height: 11px; position: relative; white-space: nowrap; }
.box { width: 7px; height: 7px; }
.tree .lvl1 { padding-left: 3px; }
.tree .lvl2 { padding-left: 13px; }
.tree .lvl2::before { content: ""; position: absolute; left: 16px; top: 0; bottom: 6px; border-left: 1px dotted #777; }
.tree .lvl1::before { content: ""; position: absolute; left: 6px; top: 0; bottom: 50px; border-left: 1px dotted #777; }
.sel { background: #e6e6e6; }
.btabs { display: flex; height: 15px; margin: 1px 0 0 2px; }
.btabs button { gap: 3px; padding: 0 4px; }
.btabs .cur, .etabs .cur { background: #fff; }
.editor { flex: 1; display: flex; flex-direction: column; min-width: 0; }
.etabs { display: flex; align-items: flex-end; height: 13px; background: linear-gradient(90deg, #dedad2, #f3f2ef); font-size: 8px; }
.etabs button { height: 13px; padding: 0 3px 2px 9px; border: 1px solid #999; border-width: 1px 1px 0 0; border-radius: 0 3px 0 0; }
.etabs .cur { margin-left: 4px; padding: 0 4px 1px 12px; font-weight: 700; border: 0; border-radius: 10px 4px 0 0; }
.etabs svg { margin: 0 1px 4px auto; }
.frame { flex: 1; display: grid; grid-template: 1fr 12px / 1fr 12px; border: 2px solid #8c8a84; border-radius: 0 0 3px 0; background: #f0f0f0; }
.canvas { position: relative; background: #fff; overflow: hidden; }
.links { position: absolute; left: 0; top: 0; width: 668px; height: 310px; }
.entity { position: absolute; border: 1px solid #4aa9a9; border-collapse: collapse; table-layout: fixed; background: linear-gradient(150deg, #fff, #c4ffff 55%, #95f5f5); line-height: 9px; }
.entity caption { height: 12px; line-height: 12px; border: 1px solid #4aa9a9; border-bottom: 0; background: linear-gradient(90deg, #fff, #b5fdfd); }
.entity td { padding: 0; height: 9px; white-space: nowrap; }
.entity td:first-child { padding-left: 3px; }
.entity .key td { height: 9px; }
.entity tfoot td { border-top: 1px solid #4aa9a9; height: 11px; }
.entity td:nth-child(2) { width: 20px; }
.entity td:nth-child(3) { width: 81px; }
.e1 { left: 146px; top: 31px; width: 175px; }
.e2 { left: 384px; top: 40px; width: 169px; }
.e3 { left: 290px; top: 214px; width: 172px; }
.e1 td:first-child { width: 54px; }
.e2 td:first-child { width: 47px; }
.e3 td:first-child { width: 49px; }
.link { position: absolute; width: 48px; text-align: center; background: #fff; line-height: 8px; }
.l1 { left: 291px; top: 150px; }
.l2 { left: 431px; top: 154px; }
.vs, .hs { display: flex; align-items: center; justify-content: space-between; padding: 2px; }
.vs { flex-direction: column; }
.vs svg, .hs svg, .otr svg { width: 7px; height: 7px; fill: none; stroke: #333; stroke-width: 1; }
.vs i { width: 11px; height: 12px; background: #c9c9c9; }
.hs i { width: 26px; height: 11px; background: #c9c9c9; }
.outtitle { height: 12px; padding-left: 2px; line-height: 12px; font-size: 8px; background: #808080; color: #cfcbb8; }
.output { height: 57px; background: #fff; }
.output ul, .output p { margin: 0; padding: 0; list-style: none; }
.output ul { margin-bottom: 9px; }
.output li::before { content: "-"; display: inline-block; width: 10px; }
.outtabs { display: flex; height: 13px; background: #fff; font-size: 8px; border-bottom: 1px solid #999; }
.otl { width: 450px; display: flex; background: #c8c8c8; border: 1px solid #666; border-width: 1px 2px 0 0; }
.step { display: grid; place-items: center; width: 12px; border: 1px solid #777; background: #e8e8e8; }
.otabs { display: flex; gap: 4px; padding-left: 3px; }
.otabs button { position: relative; z-index: 0; padding: 0 3px; }
/* slanted sheet-tab edges */
.otabs button::before, .otabs button::after { content: ""; position: absolute; z-index: -1; top: 0; bottom: 0; width: 56%; background: #efefef; }
.otabs button::before { left: 0; border-left: 1px solid #555; transform: skewX(20deg); }
.otabs button::after { right: 0; border-right: 1px solid #555; transform: skewX(-20deg); }
.otabs .cur::before, .otabs .cur::after { background: #fff; }
.otr { flex: 1; display: flex; align-items: center; padding-left: 3px; background: linear-gradient(90deg, #f2f2f2 13px, #ccc 13px); }
.status { height: 19px; padding-left: 7px; line-height: 20px; background: linear-gradient(#f8f8f8, #d6dada); font-size: 8px; }

/* Taskbar */
.taskbar { display: flex; align-items: stretch; height: 40px; flex: none; background: linear-gradient(90deg, #252b30, #262625 30%, #232b2b 60%, #232a29 80%, #282726); color: #fff; }
.start { width: 48px; }
.search { display: flex; align-items: center; width: 344px; min-width: 0; padding: 0 11px; background: #f2f2f2; border: 1px solid #b8b8b8; }
.search input { flex: 1; margin-left: 10px; background: none; font-size: 14px; }
.search input::placeholder { color: #333; opacity: 1; }
.tb { width: 48px; }
.apps { display: flex; margin-left: 2px; }
.apps button { position: relative; width: 49px; }
.run::after { content: ""; position: absolute; left: 5px; right: 4px; bottom: 0; height: 2px; background: #76b9ed; }
.focus { background: #4d5354; }
.apps .focus::after { left: 0; right: 0; }
.tray { display: flex; margin-left: auto; font-size: 12px; border-right: 1px solid #777; margin-right: 3px; padding-right: 9px; }
.weather { gap: 9px; padding-right: 12px; font-size: 13px; color: #ddd; }
.ic { width: 24px; }
.clock { width: 70px; flex-direction: column; font-size: 11px; line-height: 18px; }
.action { width: 40px; }
```
